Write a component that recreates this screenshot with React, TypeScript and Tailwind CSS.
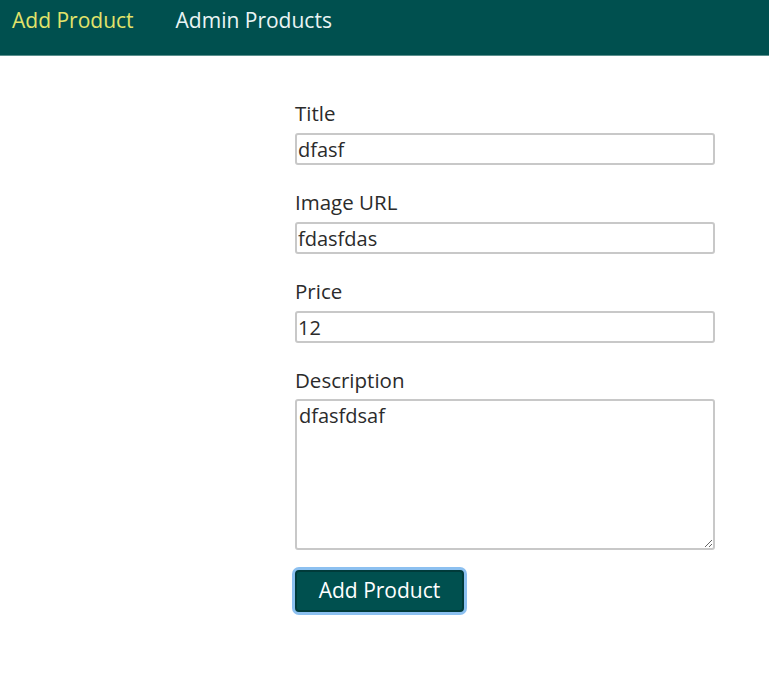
import React from 'react';

const FIELDS = [
  { id: 'title', label: 'Title', value: 'dfasf' },
  { id: 'imageUrl', label: 'Image URL', value: 'fdasfdas' },
  { id: 'price', label: 'Price', value: '12' },
];

export default function App() {
  return (
    <div className="min-h-screen bg-white font-['Open_Sans',sans-serif] text-[#2b2b2b]">
      <header className="h-[56px] bg-[#00504f] border-b border-[#5a8f8d] flex items-start px-3 pt-[6px]">
        <nav className="flex gap-[42px] text-[21px] leading-[28px]">
          <a className="text-[#e2e36a]">Add Product</a>
          <a className="text-[#eaf4f4]">Admin Products</a>
        </nav>
      </header>

      <main className="pl-[295px] pt-[43px]">
        <form className="w-[420px] flex flex-col" onSubmit={(e) => e.preventDefault()}>
          {FIELDS.map((f) => (
            <div key={f.id} className="flex flex-col mb-[23px]">
              <label htmlFor={f.id} className="text-[20.5px] leading-[28px] mb-[6px]">
                {f.label}
              </label>
              <input
                id={f.id}
                defaultValue={f.value}
                className="h-[32px] border-2 border-[#c8c8c8] rounded-[3px] px-[1px] text-[20px] text-[#2b2b2b] outline-none"
              />
            </div>
          ))}
          <div className="flex flex-col mb-[20px]">
            <label htmlFor="description" className="text-[20.5px] leading-[28px] mb-[5px]">
              Description
            </label>
            <textarea
              id="description"
              defaultValue="dfasfdsaf"
              className="h-[151px] border-2 border-[#c8c8c8] rounded-[3px] px-[2px] py-[1px] text-[20px] leading-[28px] text-[#2b2b2b] outline-none resize-y"
            />
          </div>
          <div>
            <button
              type="submit"
              className="w-[169px] h-[42px] bg-[#00504f] text-white text-[21px] rounded-[4px] border-2 border-[#003b3a] ring-[3px] ring-[#8cc0f0]"
            >
              Add Product
            </button>
          </div>
        </form>
      </main>
    </div>
  );
}
